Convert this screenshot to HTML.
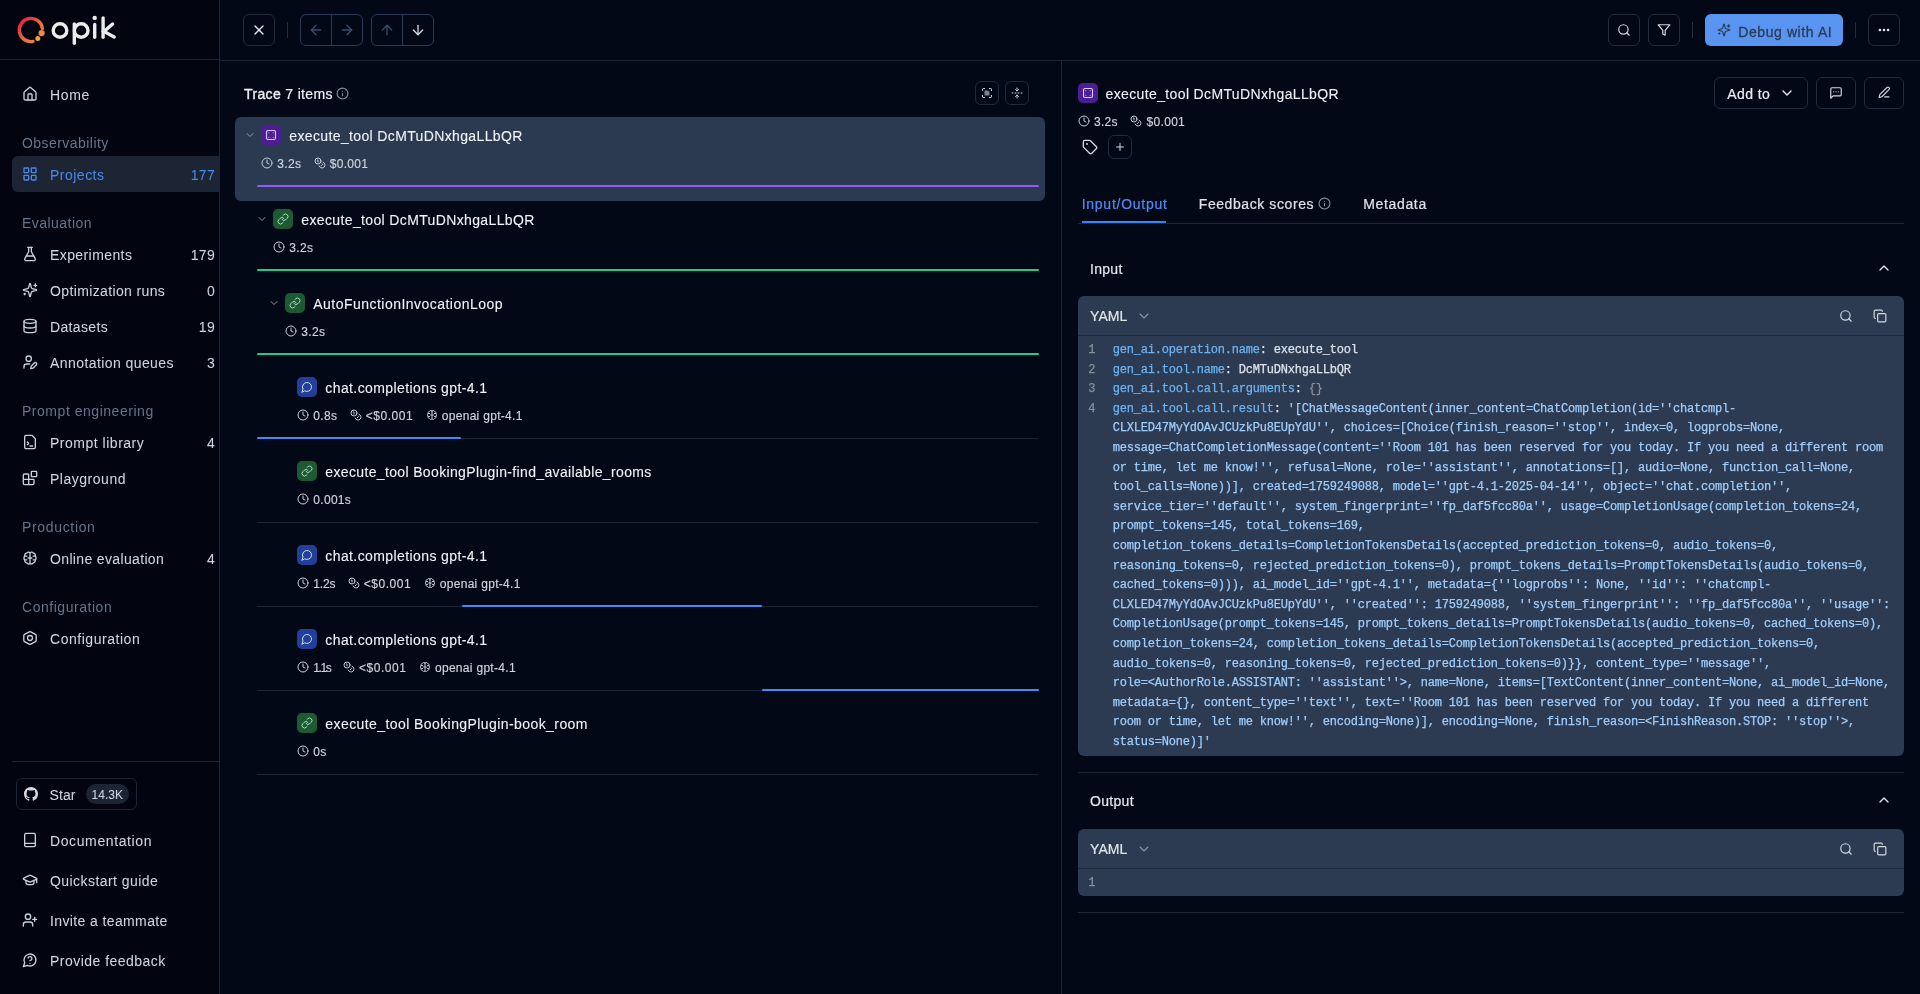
<!DOCTYPE html>
<html><head><meta charset="utf-8"><style>
*{box-sizing:border-box;margin:0;padding:0}
html,body{width:1920px;height:994px;overflow:hidden;background:#030816;font-family:"Liberation Sans",sans-serif;color:#d5d9df}
.a{position:absolute}
.t14{position:absolute;font-size:14px;line-height:20px;white-space:nowrap;letter-spacing:.35px;-webkit-text-stroke-width:.2px}
.t12{position:absolute;font-size:12px;line-height:16px;white-space:nowrap;letter-spacing:.3px;-webkit-text-stroke-width:.15px}
svg.i{position:absolute;fill:none;stroke:currentColor;stroke-linecap:round;stroke-linejoin:round}
svg.ii{fill:none;stroke:currentColor;stroke-linecap:round;stroke-linejoin:round}
#sb{position:absolute;left:0;top:0;width:220px;height:994px;background:#02050f;border-right:1px solid #1c2536}
.nav{color:#cdd6e2;-webkit-text-stroke-width:.05px}
.sec{color:#64748b;-webkit-text-stroke-width:0}
.cnt{position:absolute;right:4px;font-size:14px;line-height:20px;letter-spacing:.3px;text-align:right;-webkit-text-stroke-width:.05px;color:#cdd6e2}
.btn{position:absolute;border:1px solid #1f2a3c;border-radius:6px}
.hl{position:absolute;height:1px;background:#1c2536}
.code{position:absolute;font-family:"Liberation Mono",monospace;font-size:12px;letter-spacing:-0.2px;line-height:19.6px;white-space:pre;-webkit-text-stroke-width:.25px}
</style></head><body>
<div id="root" style="position:absolute;left:0;top:0;width:1920px;height:994px;background:#030816;will-change:transform;overflow:hidden">
<div id="sb">
<svg class="a" style="left:0;top:0" width="130" height="60" viewBox="0 0 130 60">
    <defs><linearGradient id="lg" x1="0" y1="0" x2="1" y2="1"><stop offset="0" stop-color="#e3173f"/><stop offset=".55" stop-color="#ee6a3c"/><stop offset="1" stop-color="#f4903a"/></linearGradient></defs>
    <path d="M42.4 28.4 A11.6 11.6 0 1 0 33.0 41.4" stroke="url(#lg)" stroke-width="3.4" fill="none" stroke-linecap="round"/>
    <circle cx="41.6" cy="33.1" r="3.1" fill="#f08a3c"/>
    <circle cx="37.8" cy="38.4" r="2.5" fill="#f29a42"/>
    <g stroke="#ececec" stroke-width="3.4" fill="none" stroke-linecap="round">
      <circle cx="60" cy="30.5" r="6.8"/><circle cx="81.2" cy="30.5" r="6.8"/>
      <path d="M74.3 24 V43.2"/><path d="M94.7 24.5 V37.3"/><path d="M103.1 18 V37.3"/><path d="M112.6 24 L104 31.5 L114.2 37"/>
    </g><circle cx="94.7" cy="17.9" r="2.2" fill="#ececec"/></svg>
<div class="hl" style="left:0;top:59px;width:219px"></div>
<svg class="i" style="left:22px;top:86px;color:#c8d1de;" width="16" height="16" viewBox="0 0 24 24" stroke-width="2"><path d="M15 21v-8a1 1 0 0 0-1-1h-4a1 1 0 0 0-1 1v8"/><path d="M3 10a2 2 0 0 1 .709-1.528l7-5.999a2 2 0 0 1 2.582 0l7 5.999A2 2 0 0 1 21 10v9a2 2 0 0 1-2 2H5a2 2 0 0 1-2-2z"/></svg>
<div class="t14 nav" style="left:50px;top:85.15px;letter-spacing:0.68px;">Home</div>
<div class="t14 sec" style="left:22px;top:133.35px;letter-spacing:0.449px;">Observability</div>
<div class="a" style="left:12px;top:156px;width:207px;height:36px;background:#1d2535;border-radius:6px 0 0 6px"></div>
<svg class="i" style="left:22px;top:166px;color:#4a88ec;" width="16" height="16" viewBox="0 0 24 24" stroke-width="2"><rect width="7" height="7" x="3" y="3" rx="1"/><rect width="7" height="7" x="14" y="3" rx="1"/><rect width="7" height="7" x="14" y="14" rx="1"/><rect width="7" height="7" x="3" y="14" rx="1"/></svg>
<div class="t14 nav" style="left:50px;top:164.75px;letter-spacing:0.49px;color:#4a88ec">Projects</div>
<div class="cnt" style="top:164.75px;color:#4a88ec">177</div>
<div class="t14 sec" style="left:22px;top:213.35px;letter-spacing:0.456px;">Evaluation</div>
<svg class="i" style="left:22px;top:246px;color:#c8d1de;" width="16" height="16" viewBox="0 0 24 24" stroke-width="2"><path d="M14 2v6a2 2 0 0 0 .245.96l5.51 10.08A2 2 0 0 1 18 22H6a2 2 0 0 1-1.755-2.96l5.51-10.08A2 2 0 0 0 10 8V2"/><path d="M6.453 15h11.094"/><path d="M8.5 2h7"/></svg>
<div class="t14 nav" style="left:50px;top:244.75px;letter-spacing:0.409px;">Experiments</div>
<div class="cnt" style="top:244.75px">179</div>
<svg class="i" style="left:22px;top:282px;color:#c8d1de;" width="16" height="16" viewBox="0 0 24 24" stroke-width="2"><path d="M9.937 15.5A2 2 0 0 0 8.5 14.063l-6.135-1.582a.5.5 0 0 1 0-.962L8.5 9.936A2 2 0 0 0 9.937 8.5l1.582-6.135a.5.5 0 0 1 .963 0L14.063 8.5A2 2 0 0 0 15.5 9.937l6.135 1.581a.5.5 0 0 1 0 .964L15.5 14.063a2 2 0 0 0-1.437 1.437l-1.582 6.135a.5.5 0 0 1-.963 0z"/><path d="M20 3v4"/><path d="M22 5h-4"/><path d="M4 17v2"/><path d="M5 18H3"/></svg>
<div class="t14 nav" style="left:50px;top:280.75px;letter-spacing:0.367px;">Optimization runs</div>
<div class="cnt" style="top:280.75px">0</div>
<svg class="i" style="left:22px;top:318px;color:#c8d1de;" width="16" height="16" viewBox="0 0 24 24" stroke-width="2"><ellipse cx="12" cy="5" rx="9" ry="3"/><path d="M3 5V19A9 3 0 0 0 21 19V5"/><path d="M3 12A9 3 0 0 0 21 12"/></svg>
<div class="t14 nav" style="left:50px;top:316.75px;letter-spacing:0.35px;">Datasets</div>
<div class="cnt" style="top:316.75px">19</div>
<svg class="i" style="left:22px;top:354px;color:#c8d1de;" width="16" height="16" viewBox="0 0 24 24" stroke-width="2"><path d="M11.5 15H7a4 4 0 0 0-4 4v2"/><path d="M21.378 16.626a1 1 0 0 0-3.004-3.004l-4.01 4.012a2 2 0 0 0-.506.854l-.837 2.87a.5.5 0 0 0 .62.62l2.87-.837a2 2 0 0 0 .854-.506z"/><circle cx="10" cy="7" r="4"/></svg>
<div class="t14 nav" style="left:50px;top:352.75px;letter-spacing:0.421px;">Annotation queues</div>
<div class="cnt" style="top:352.75px">3</div>
<div class="t14 sec" style="left:22px;top:401.35px;letter-spacing:0.529px;">Prompt engineering</div>
<svg class="i" style="left:22px;top:434px;color:#c8d1de;" width="16" height="16" viewBox="0 0 24 24" stroke-width="2"><path d="M15 2H6a2 2 0 0 0-2 2v16a2 2 0 0 0 2 2h12a2 2 0 0 0 2-2V7Z"/><path d="m8 16 2-2-2-2"/><path d="M12 18h4"/></svg>
<div class="t14 nav" style="left:50px;top:432.75px;letter-spacing:0.513px;">Prompt library</div>
<div class="cnt" style="top:432.75px">4</div>
<svg class="i" style="left:22px;top:470px;color:#c8d1de;" width="16" height="16" viewBox="0 0 24 24" stroke-width="2"><path d="M10 22V7a1 1 0 0 0-1-1H4a2 2 0 0 0-2 2v12a2 2 0 0 0 2 2h12a2 2 0 0 0 2-2v-5a1 1 0 0 0-1-1H2"/><rect x="14" y="2" width="8" height="8" rx="1"/></svg>
<div class="t14 nav" style="left:50px;top:468.75px;letter-spacing:0.518px;">Playground</div>
<div class="t14 sec" style="left:22px;top:517.35px;letter-spacing:0.662px;">Production</div>
<svg class="i" style="left:22px;top:550px;color:#c8d1de;" width="16" height="16" viewBox="0 0 24 24" stroke-width="2"><path d="M12 4C10.5 2.6 7.8 2.8 7 4.8 4.9 5 3.6 6.9 4.1 8.9 2.6 10.4 2.6 13.4 4.1 14.9 3.7 17.2 5.1 19.2 7.3 19.3 8.2 21.2 10.6 21.5 12 20 13.4 21.5 15.8 21.2 16.7 19.3 18.9 19.2 20.3 17.2 19.9 14.9 21.4 13.4 21.4 10.4 19.9 8.9 20.4 6.9 19.1 5 17 4.8 16.2 2.8 13.5 2.6 12 4Z"/><path d="M12 4v16"/><path d="M9.2 12h5.6"/><path d="M4.3 9.2h3"/><path d="M4.3 14.8h3"/><path d="M19.7 9.2h-3"/><path d="M19.7 14.8h-3"/></svg>
<div class="t14 nav" style="left:50px;top:548.75px;letter-spacing:0.35px;">Online evaluation</div>
<div class="cnt" style="top:548.75px">4</div>
<div class="t14 sec" style="left:22px;top:597.35px;letter-spacing:0.534px;">Configuration</div>
<svg class="i" style="left:22px;top:630px;color:#c8d1de;" width="16" height="16" viewBox="0 0 24 24" stroke-width="2"><path d="M10.8 2.7a2.4 2.4 0 0 1 2.4 0l6.9 3.9a2.4 2.4 0 0 1 1.2 2.1v6.6a2.4 2.4 0 0 1-1.2 2.1l-6.9 3.9a2.4 2.4 0 0 1-2.4 0l-6.9-3.9a2.4 2.4 0 0 1-1.2-2.1V8.7a2.4 2.4 0 0 1 1.2-2.1Z"/><circle cx="12" cy="12" r="3.7"/></svg>
<div class="t14 nav" style="left:50px;top:628.75px;letter-spacing:0.534px;">Configuration</div>
<div class="hl" style="left:12px;top:761px;width:207px"></div>
<div class="btn" style="left:16px;top:778px;width:121px;height:32px;border-color:#1c2536"></div>
<svg class="a" style="left:24px;top:787px" width="14" height="14" viewBox="0 0 16 16"><path fill="#d5d9df" d="M8 0C3.58 0 0 3.58 0 8c0 3.54 2.29 6.53 5.47 7.59.4.07.55-.17.55-.38 0-.19-.01-.82-.01-1.49-2.01.37-2.530-.49-2.69-.94-.09-.23-.48-.94-.82-1.13-.28-.15-.68-.52-.01-.53.63-.01 1.08.58 1.23.82.72 1.21 1.870.87 2.33.66.07-.52.28-.87.51-1.07-1.78-.2-3.64-.89-3.64-3.95 0-.87.31-1.59.82-2.15-.08-.2-.36-1.02.08-2.12 0 0 .67-.21 2.2.82.64-.18 1.32-.27 2-.27.68 0 1.36.09 2 .27 1.53-1.04 2.2-.82 2.2-.82.44 1.1.16 1.92.08 2.12.51.56.82 1.27.82 2.15 0 3.07-1.87 3.75-3.65 3.95.29.25.54.73.54 1.48 0 1.07-.01 1.93-.01 2.2 0 .21.15.46.55.38A8.013 8.013 0 0016 8c0-4.42-3.58-8-8-8z"/></svg>
<div class="t14 nav" style="left:49.5px;top:784.85px;letter-spacing:.1px">Star</div>
<div class="a" style="left:86px;top:784px;width:43px;height:20px;border-radius:10px;background:#1d2535"></div>
<div class="t12 nav" style="left:91.6px;top:786.74px;letter-spacing:0">14.3K</div>
<svg class="i" style="left:22px;top:832px;color:#c8d1de;" width="16" height="16" viewBox="0 0 24 24" stroke-width="2"><rect x="4" y="2" width="16" height="20" rx="2"/><path d="M4 17h16"/></svg>
<div class="t14 nav" style="left:50px;top:830.95px;letter-spacing:0.61px;">Documentation</div>
<svg class="i" style="left:22px;top:872px;color:#c8d1de;" width="16" height="16" viewBox="0 0 24 24" stroke-width="2"><path d="M21.42 10.922a1 1 0 0 0-.019-1.838L12.83 5.18a2 2 0 0 0-1.66 0L2.6 9.08a1 1 0 0 0 0 1.832l8.57 3.908a2 2 0 0 0 1.66 0z"/><path d="M22 10v6"/><path d="M6 12.5V16a6 3 0 0 0 12 0v-3.5"/></svg>
<div class="t14 nav" style="left:50px;top:870.95px;letter-spacing:0.442px;">Quickstart guide</div>
<svg class="i" style="left:22px;top:912px;color:#c8d1de;" width="16" height="16" viewBox="0 0 24 24" stroke-width="2"><path d="M16 21v-2a4 4 0 0 0-4-4H6a4 4 0 0 0-4 4v2"/><circle cx="9" cy="7" r="4"/><path d="M19 8v6"/><path d="M22 11h-6"/></svg>
<div class="t14 nav" style="left:50px;top:910.95px;letter-spacing:0.382px;">Invite a teammate</div>
<svg class="i" style="left:22px;top:952px;color:#c8d1de;" width="16" height="16" viewBox="0 0 24 24" stroke-width="2"><path d="M7.9 20A9 9 0 1 0 4 16.1L2 22Z"/><path d="M9.09 9a3 3 0 0 1 5.83 1c0 2-3 3-3 3"/><path d="M12 17h.01"/></svg>
<div class="t14 nav" style="left:50px;top:950.95px;letter-spacing:0.475px;">Provide feedback</div>
</div>
<div class="hl" style="left:220px;top:60px;width:1700px"></div>
<div class="a" style="left:1061px;top:61px;width:1px;height:933px;background:#1c2536"></div>
<div class="btn" style="left:243px;top:14px;width:32px;height:32px;border-color:#222c3d"></div>
<svg class="i" style="left:251px;top:22px;color:#e8ebef;" width="16" height="16" viewBox="0 0 24 24" stroke-width="2"><path d="M18 6 6 18"/><path d="m6 6 12 12"/></svg>
<div class="a" style="left:287px;top:22px;width:1px;height:16px;background:#222c3d"></div>
<div class="btn" style="left:300px;top:14px;width:63px;height:32px;border-color:#2a3954"></div>
<div class="a" style="left:331px;top:14px;width:1px;height:32px;background:#2a3954"></div>
<svg class="i" style="left:308px;top:22px;color:#3a4e6e;" width="16" height="16" viewBox="0 0 24 24" stroke-width="2"><path d="m12 19-7-7 7-7"/><path d="M19 12H5"/></svg>
<svg class="i" style="left:339px;top:22px;color:#3a4e6e;" width="16" height="16" viewBox="0 0 24 24" stroke-width="2"><path d="M5 12h14"/><path d="m12 5 7 7-7 7"/></svg>
<div class="btn" style="left:371px;top:14px;width:63px;height:32px;border-color:#2a3954"></div>
<div class="a" style="left:402px;top:14px;width:1px;height:32px;background:#2a3954"></div>
<svg class="i" style="left:379px;top:22px;color:#3a4e6e;" width="16" height="16" viewBox="0 0 24 24" stroke-width="2"><path d="m5 12 7-7 7 7"/><path d="M12 19V5"/></svg>
<svg class="i" style="left:410px;top:22px;color:#d5d9df;" width="16" height="16" viewBox="0 0 24 24" stroke-width="2"><path d="M12 5v14"/><path d="m19 12-7 7-7-7"/></svg>
<div class="btn" style="left:1608px;top:14px;width:32px;height:32px;border-color:#222c3d"></div>
<svg class="i" style="left:1617px;top:23px;color:#d5d9df;" width="14" height="14" viewBox="0 0 24 24" stroke-width="2"><circle cx="11" cy="11" r="8"/><path d="m21 21-4.3-4.3"/></svg>
<div class="btn" style="left:1648px;top:14px;width:32px;height:32px;border-color:#222c3d"></div>
<svg class="i" style="left:1657px;top:23px;color:#d5d9df;" width="14" height="14" viewBox="0 0 24 24" stroke-width="2"><path d="M22 3H2l8 9.46V19l4 2v-8.54L22 3z"/></svg>
<div class="a" style="left:1692px;top:22px;width:1px;height:16px;background:#222c3d"></div>
<div class="a" style="left:1705px;top:14px;width:138px;height:32px;background:#5a94f1;border-radius:6px"></div>
<svg class="i" style="left:1717px;top:23.3px;color:#2c3a52;" width="14" height="14" viewBox="0 0 24 24" stroke-width="2"><path d="M9.937 15.5A2 2 0 0 0 8.5 14.063l-6.135-1.582a.5.5 0 0 1 0-.962L8.5 9.936A2 2 0 0 0 9.937 8.5l1.582-6.135a.5.5 0 0 1 .963 0L14.063 8.5A2 2 0 0 0 15.5 9.937l6.135 1.581a.5.5 0 0 1 0 .964L15.5 14.063a2 2 0 0 0-1.437 1.437l-1.582 6.135a.5.5 0 0 1-.963 0z"/><path d="M20 3v4"/><path d="M22 5h-4"/><path d="M4 17v2"/><path d="M5 18H3"/></svg>
<div class="t14 " style="left:1738.2px;top:21.85px;letter-spacing:0.594px;color:#2c3a52;-webkit-text-stroke:.3px #2c3a52">Debug with AI</div>
<div class="a" style="left:1855px;top:22px;width:1px;height:16px;background:#222c3d"></div>
<div class="btn" style="left:1868px;top:14px;width:32px;height:32px;border-color:#222c3d"></div>
<svg class="i" style="left:1877px;top:23px;color:#e8ebef;" width="14" height="14" viewBox="0 0 24 24" stroke-width="2.6"><circle cx="12" cy="12" r="1"/><circle cx="19" cy="12" r="1"/><circle cx="5" cy="12" r="1"/></svg>
<div class="t14" style="left:244px;top:83.85px;color:#eef0f3"><span style="-webkit-text-stroke:.35px #eef0f3">Trace</span> 7 items</div>
<svg class="i" style="left:336px;top:87px;color:#8792a2;" width="13" height="13" viewBox="0 0 24 24" stroke-width="2"><circle cx="12" cy="12" r="10"/><path d="M12 16v-4"/><path d="M12 8h.01"/></svg>
<svg class="i" style="left:981px;top:87px;color:#8792a2;" width="12" height="12" viewBox="0 0 24 24" stroke-width="2"><g stroke="#e6e9ee"><path d="M3 7V5a2 2 0 0 1 2-2h2"/><path d="M17 3h2a2 2 0 0 1 2 2v2"/><path d="M21 17v2a2 2 0 0 1-2 2h-2"/><path d="M7 21H5a2 2 0 0 1-2-2v-2"/></g><path d="M7 7h7l3 3v7H7z" fill="#7a8494" stroke="none"/></svg>
<div class="btn" style="left:975px;top:81px;width:24px;height:24px;border-color:#1f2a3c"></div>
<div class="btn" style="left:1005px;top:81px;width:24px;height:24px;border-color:#1f2a3c"></div>
<svg class="i" style="left:1011px;top:87px;color:#c9ced6;" width="12" height="12" viewBox="0 0 24 24" stroke-width="2"><path d="M12 22v-6"/><path d="M12 8V2"/><path d="M4 12H2"/><path d="M10 12H8"/><path d="M16 12h-2"/><path d="M22 12h-2"/><path d="m15 19-3-3-3 3"/><path d="m15 5-3 3-3-3"/></svg>
<div class="a" style="left:235px;top:117px;width:810px;height:84px;background:#2c3a51;border-radius:6px"></div>
<svg class="i" style="left:244px;top:129px;color:#8d96a5;" width="12" height="12" viewBox="0 0 24 24" stroke-width="2"><path d="m6 9 6 6 6-6"/></svg>
<div class="a" style="left:261px;top:125px;width:20px;height:20px;border-radius:5px;background:#4d1d96"></div>
<svg class="a" style="left:261px;top:125px" width="20" height="20" viewBox="0 0 20 20"><rect x="5.5" y="5.5" width="9" height="9" rx="1.5" fill="none" stroke="#dccbff" stroke-width="1.1"/><circle cx="7.8" cy="7.8" r=".5" fill="#dccbff"/><circle cx="12.2" cy="7.8" r=".5" fill="#dccbff"/><circle cx="7.8" cy="12.2" r=".5" fill="#dccbff"/><circle cx="12.2" cy="12.2" r=".5" fill="#dccbff"/></svg>
<div class="t14 " style="left:289.3px;top:125.85px;letter-spacing:0.364px;color:#f1f4f8;-webkit-text-stroke-width:.1px">execute_tool DcMTuDNxhgaLLbQR</div>
<div class="a" style="left:261.3px;top:155.64px;display:flex;align-items:flex-start"><svg style="margin-top:1.36px;margin-right:4px;flex:none;color:#c9cfd7" class="ii" width="12" height="12" viewBox="0 0 24 24" stroke-width="2"><circle cx="12" cy="12" r="10"/><path d="M12 6v6l4 2"/></svg><span style="font-size:12px;line-height:16px;letter-spacing:0.3px;-webkit-text-stroke-width:.15px;color:#d0d5dc;white-space:nowrap">3.2s</span><svg style="margin-left:12.5px;margin-top:1.36px;margin-right:4px;flex:none;color:#c9cfd7" class="ii" width="12" height="12" viewBox="0 0 24 24" stroke-width="2"><circle cx="8" cy="8" r="6"/><path d="M18.09 10.37A6 6 0 1 1 10.34 18"/><path d="M7 6h1v4"/><path d="m16.71 13.88.7.71-2.82 2.82"/></svg><span style="font-size:12px;line-height:16px;letter-spacing:0.3px;-webkit-text-stroke-width:.15px;color:#d0d5dc;white-space:nowrap">$0.001</span></div>
<div class="a" style="left:257px;top:185px;width:782px;height:2px;background:#8f5cf7;border-radius:1px"></div>
<svg class="i" style="left:256px;top:213px;color:#8d96a5;" width="12" height="12" viewBox="0 0 24 24" stroke-width="2"><path d="m6 9 6 6 6-6"/></svg>
<div class="a" style="left:273px;top:209px;width:20px;height:20px;border-radius:5px;background:#1d5a34"></div>
<svg class="i" style="left:277px;top:213px;color:#a6e3b4;" width="12" height="12" viewBox="0 0 24 24" stroke-width="2"><path d="M10 13a5 5 0 0 0 7.54.54l3-3a5 5 0 0 0-7.07-7.07l-1.72 1.71"/><path d="M14 11a5 5 0 0 0-7.54-.54l-3 3a5 5 0 0 0 7.07 7.07l1.71-1.71"/></svg>
<div class="t14 " style="left:301.3px;top:209.85px;letter-spacing:0.364px;color:#f1f4f8;-webkit-text-stroke-width:.1px">execute_tool DcMTuDNxhgaLLbQR</div>
<div class="a" style="left:273.3px;top:239.64px;display:flex;align-items:flex-start"><svg style="margin-top:1.36px;margin-right:4px;flex:none;color:#c9cfd7" class="ii" width="12" height="12" viewBox="0 0 24 24" stroke-width="2"><circle cx="12" cy="12" r="10"/><path d="M12 6v6l4 2"/></svg><span style="font-size:12px;line-height:16px;letter-spacing:0.3px;-webkit-text-stroke-width:.15px;color:#d0d5dc;white-space:nowrap">3.2s</span></div>
<div class="hl" style="left:257px;top:270px;width:781px"></div>
<div class="a" style="left:257px;top:269px;width:782px;height:2px;background:#19cb8d;border-radius:1px"></div>
<svg class="i" style="left:268px;top:297px;color:#8d96a5;" width="12" height="12" viewBox="0 0 24 24" stroke-width="2"><path d="m6 9 6 6 6-6"/></svg>
<div class="a" style="left:285px;top:293px;width:20px;height:20px;border-radius:5px;background:#1d5a34"></div>
<svg class="i" style="left:289px;top:297px;color:#a6e3b4;" width="12" height="12" viewBox="0 0 24 24" stroke-width="2"><path d="M10 13a5 5 0 0 0 7.54.54l3-3a5 5 0 0 0-7.07-7.07l-1.72 1.71"/><path d="M14 11a5 5 0 0 0-7.54-.54l-3 3a5 5 0 0 0 7.07 7.07l1.71-1.71"/></svg>
<div class="t14 " style="left:313.3px;top:293.85px;letter-spacing:0.469px;color:#f1f4f8;-webkit-text-stroke-width:.1px">AutoFunctionInvocationLoop</div>
<div class="a" style="left:285.3px;top:323.64px;display:flex;align-items:flex-start"><svg style="margin-top:1.36px;margin-right:4px;flex:none;color:#c9cfd7" class="ii" width="12" height="12" viewBox="0 0 24 24" stroke-width="2"><circle cx="12" cy="12" r="10"/><path d="M12 6v6l4 2"/></svg><span style="font-size:12px;line-height:16px;letter-spacing:0.3px;-webkit-text-stroke-width:.15px;color:#d0d5dc;white-space:nowrap">3.2s</span></div>
<div class="hl" style="left:257px;top:354px;width:781px"></div>
<div class="a" style="left:257px;top:353px;width:782px;height:2px;background:#19cb8d;border-radius:1px"></div>
<div class="a" style="left:297px;top:377px;width:20px;height:20px;border-radius:5px;background:#22409a"></div>
<svg class="i" style="left:301px;top:381px;color:#d0dcff;" width="12" height="12" viewBox="0 0 24 24" stroke-width="2"><path d="M7.9 20A9 9 0 1 0 4 16.1L2 22Z"/></svg>
<div class="t14 " style="left:325.3px;top:377.85px;letter-spacing:0.402px;color:#f1f4f8;-webkit-text-stroke-width:.1px">chat.completions gpt-4.1</div>
<div class="a" style="left:297.3px;top:407.64px;display:flex;align-items:flex-start"><svg style="margin-top:1.36px;margin-right:4px;flex:none;color:#c9cfd7" class="ii" width="12" height="12" viewBox="0 0 24 24" stroke-width="2"><circle cx="12" cy="12" r="10"/><path d="M12 6v6l4 2"/></svg><span style="font-size:12px;line-height:16px;letter-spacing:0.3px;-webkit-text-stroke-width:.15px;color:#d0d5dc;white-space:nowrap">0.8s</span><svg style="margin-left:12.5px;margin-top:1.36px;margin-right:4px;flex:none;color:#c9cfd7" class="ii" width="12" height="12" viewBox="0 0 24 24" stroke-width="2"><circle cx="8" cy="8" r="6"/><path d="M18.09 10.37A6 6 0 1 1 10.34 18"/><path d="M7 6h1v4"/><path d="m16.71 13.88.7.71-2.82 2.82"/></svg><span style="font-size:12px;line-height:16px;letter-spacing:0.55px;-webkit-text-stroke-width:.15px;color:#d0d5dc;white-space:nowrap">&lt;$0.001</span><svg style="margin-left:12.5px;margin-top:1.36px;margin-right:4px;flex:none;color:#c9cfd7" class="ii" width="12" height="12" viewBox="0 0 24 24" stroke-width="2"><path d="M12 4C10.5 2.6 7.8 2.8 7 4.8 4.9 5 3.6 6.9 4.1 8.9 2.6 10.4 2.6 13.4 4.1 14.9 3.7 17.2 5.1 19.2 7.3 19.3 8.2 21.2 10.6 21.5 12 20 13.4 21.5 15.8 21.2 16.7 19.3 18.9 19.2 20.3 17.2 19.9 14.9 21.4 13.4 21.4 10.4 19.9 8.9 20.4 6.9 19.1 5 17 4.8 16.2 2.8 13.5 2.6 12 4Z"/><path d="M12 4v16"/><path d="M9.2 12h5.6"/><path d="M4.3 9.2h3"/><path d="M4.3 14.8h3"/><path d="M19.7 9.2h-3"/><path d="M19.7 14.8h-3"/></svg><span style="font-size:12px;line-height:16px;letter-spacing:0.3px;-webkit-text-stroke-width:.15px;color:#d0d5dc;white-space:nowrap">openai gpt-4.1</span></div>
<div class="hl" style="left:257px;top:438px;width:781px"></div>
<div class="a" style="left:257px;top:437px;width:204px;height:2px;background:#3c8cfa;border-radius:1px"></div>
<div class="a" style="left:297px;top:461px;width:20px;height:20px;border-radius:5px;background:#1d5a34"></div>
<svg class="i" style="left:301px;top:465px;color:#a6e3b4;" width="12" height="12" viewBox="0 0 24 24" stroke-width="2"><path d="M10 13a5 5 0 0 0 7.54.54l3-3a5 5 0 0 0-7.07-7.07l-1.72 1.71"/><path d="M14 11a5 5 0 0 0-7.54-.54l-3 3a5 5 0 0 0 7.07 7.07l1.71-1.71"/></svg>
<div class="t14 " style="left:325.3px;top:461.85px;letter-spacing:0.353px;color:#f1f4f8;-webkit-text-stroke-width:.1px">execute_tool BookingPlugin-find_available_rooms</div>
<div class="a" style="left:297.3px;top:491.64px;display:flex;align-items:flex-start"><svg style="margin-top:1.36px;margin-right:4px;flex:none;color:#c9cfd7" class="ii" width="12" height="12" viewBox="0 0 24 24" stroke-width="2"><circle cx="12" cy="12" r="10"/><path d="M12 6v6l4 2"/></svg><span style="font-size:12px;line-height:16px;letter-spacing:0.3px;-webkit-text-stroke-width:.15px;color:#d0d5dc;white-space:nowrap">0.001s</span></div>
<div class="hl" style="left:257px;top:522px;width:781px"></div>
<div class="a" style="left:297px;top:545px;width:20px;height:20px;border-radius:5px;background:#22409a"></div>
<svg class="i" style="left:301px;top:549px;color:#d0dcff;" width="12" height="12" viewBox="0 0 24 24" stroke-width="2"><path d="M7.9 20A9 9 0 1 0 4 16.1L2 22Z"/></svg>
<div class="t14 " style="left:325.3px;top:545.85px;letter-spacing:0.402px;color:#f1f4f8;-webkit-text-stroke-width:.1px">chat.completions gpt-4.1</div>
<div class="a" style="left:297.3px;top:575.64px;display:flex;align-items:flex-start"><svg style="margin-top:1.36px;margin-right:4px;flex:none;color:#c9cfd7" class="ii" width="12" height="12" viewBox="0 0 24 24" stroke-width="2"><circle cx="12" cy="12" r="10"/><path d="M12 6v6l4 2"/></svg><span style="font-size:12px;line-height:16px;letter-spacing:-0.2px;-webkit-text-stroke-width:.15px;color:#d0d5dc;white-space:nowrap">1.2s</span><svg style="margin-left:12.5px;margin-top:1.36px;margin-right:4px;flex:none;color:#c9cfd7" class="ii" width="12" height="12" viewBox="0 0 24 24" stroke-width="2"><circle cx="8" cy="8" r="6"/><path d="M18.09 10.37A6 6 0 1 1 10.34 18"/><path d="M7 6h1v4"/><path d="m16.71 13.88.7.71-2.82 2.82"/></svg><span style="font-size:12px;line-height:16px;letter-spacing:0.55px;-webkit-text-stroke-width:.15px;color:#d0d5dc;white-space:nowrap">&lt;$0.001</span><svg style="margin-left:12.5px;margin-top:1.36px;margin-right:4px;flex:none;color:#c9cfd7" class="ii" width="12" height="12" viewBox="0 0 24 24" stroke-width="2"><path d="M12 4C10.5 2.6 7.8 2.8 7 4.8 4.9 5 3.6 6.9 4.1 8.9 2.6 10.4 2.6 13.4 4.1 14.9 3.7 17.2 5.1 19.2 7.3 19.3 8.2 21.2 10.6 21.5 12 20 13.4 21.5 15.8 21.2 16.7 19.3 18.9 19.2 20.3 17.2 19.9 14.9 21.4 13.4 21.4 10.4 19.9 8.9 20.4 6.9 19.1 5 17 4.8 16.2 2.8 13.5 2.6 12 4Z"/><path d="M12 4v16"/><path d="M9.2 12h5.6"/><path d="M4.3 9.2h3"/><path d="M4.3 14.8h3"/><path d="M19.7 9.2h-3"/><path d="M19.7 14.8h-3"/></svg><span style="font-size:12px;line-height:16px;letter-spacing:0.3px;-webkit-text-stroke-width:.15px;color:#d0d5dc;white-space:nowrap">openai gpt-4.1</span></div>
<div class="hl" style="left:257px;top:606px;width:781px"></div>
<div class="a" style="left:462px;top:605px;width:300px;height:2px;background:#3c8cfa;border-radius:1px"></div>
<div class="a" style="left:297px;top:629px;width:20px;height:20px;border-radius:5px;background:#22409a"></div>
<svg class="i" style="left:301px;top:633px;color:#d0dcff;" width="12" height="12" viewBox="0 0 24 24" stroke-width="2"><path d="M7.9 20A9 9 0 1 0 4 16.1L2 22Z"/></svg>
<div class="t14 " style="left:325.3px;top:629.85px;letter-spacing:0.402px;color:#f1f4f8;-webkit-text-stroke-width:.1px">chat.completions gpt-4.1</div>
<div class="a" style="left:297.3px;top:659.64px;display:flex;align-items:flex-start"><svg style="margin-top:1.36px;margin-right:4px;flex:none;color:#c9cfd7" class="ii" width="12" height="12" viewBox="0 0 24 24" stroke-width="2"><circle cx="12" cy="12" r="10"/><path d="M12 6v6l4 2"/></svg><span style="font-size:12px;line-height:16px;letter-spacing:-1.4px;-webkit-text-stroke-width:.15px;color:#d0d5dc;white-space:nowrap">1.1s</span><svg style="margin-left:12.5px;margin-top:1.36px;margin-right:4px;flex:none;color:#c9cfd7" class="ii" width="12" height="12" viewBox="0 0 24 24" stroke-width="2"><circle cx="8" cy="8" r="6"/><path d="M18.09 10.37A6 6 0 1 1 10.34 18"/><path d="M7 6h1v4"/><path d="m16.71 13.88.7.71-2.82 2.82"/></svg><span style="font-size:12px;line-height:16px;letter-spacing:0.55px;-webkit-text-stroke-width:.15px;color:#d0d5dc;white-space:nowrap">&lt;$0.001</span><svg style="margin-left:12.5px;margin-top:1.36px;margin-right:4px;flex:none;color:#c9cfd7" class="ii" width="12" height="12" viewBox="0 0 24 24" stroke-width="2"><path d="M12 4C10.5 2.6 7.8 2.8 7 4.8 4.9 5 3.6 6.9 4.1 8.9 2.6 10.4 2.6 13.4 4.1 14.9 3.7 17.2 5.1 19.2 7.3 19.3 8.2 21.2 10.6 21.5 12 20 13.4 21.5 15.8 21.2 16.7 19.3 18.9 19.2 20.3 17.2 19.9 14.9 21.4 13.4 21.4 10.4 19.9 8.9 20.4 6.9 19.1 5 17 4.8 16.2 2.8 13.5 2.6 12 4Z"/><path d="M12 4v16"/><path d="M9.2 12h5.6"/><path d="M4.3 9.2h3"/><path d="M4.3 14.8h3"/><path d="M19.7 9.2h-3"/><path d="M19.7 14.8h-3"/></svg><span style="font-size:12px;line-height:16px;letter-spacing:0.3px;-webkit-text-stroke-width:.15px;color:#d0d5dc;white-space:nowrap">openai gpt-4.1</span></div>
<div class="hl" style="left:257px;top:690px;width:781px"></div>
<div class="a" style="left:762px;top:689px;width:276.5px;height:2px;background:#3c8cfa;border-radius:1px"></div>
<div class="a" style="left:297px;top:713px;width:20px;height:20px;border-radius:5px;background:#1d5a34"></div>
<svg class="i" style="left:301px;top:717px;color:#a6e3b4;" width="12" height="12" viewBox="0 0 24 24" stroke-width="2"><path d="M10 13a5 5 0 0 0 7.54.54l3-3a5 5 0 0 0-7.07-7.07l-1.72 1.71"/><path d="M14 11a5 5 0 0 0-7.54-.54l-3 3a5 5 0 0 0 7.07 7.07l1.71-1.71"/></svg>
<div class="t14 " style="left:325.3px;top:713.85px;letter-spacing:0.419px;color:#f1f4f8;-webkit-text-stroke-width:.1px">execute_tool BookingPlugin-book_room</div>
<div class="a" style="left:297.3px;top:743.64px;display:flex;align-items:flex-start"><svg style="margin-top:1.36px;margin-right:4px;flex:none;color:#c9cfd7" class="ii" width="12" height="12" viewBox="0 0 24 24" stroke-width="2"><circle cx="12" cy="12" r="10"/><path d="M12 6v6l4 2"/></svg><span style="font-size:12px;line-height:16px;letter-spacing:0.3px;-webkit-text-stroke-width:.15px;color:#d0d5dc;white-space:nowrap">0s</span></div>
<div class="hl" style="left:257px;top:774px;width:781px"></div>
<div class="a" style="left:1078px;top:83px;width:20px;height:20px;border-radius:5px;background:#4d1d96"></div>
<svg class="a" style="left:1078px;top:83px" width="20" height="20" viewBox="0 0 20 20"><rect x="5.5" y="5.5" width="9" height="9" rx="1.5" fill="none" stroke="#dccbff" stroke-width="1.1"/><circle cx="7.8" cy="7.8" r=".5" fill="#dccbff"/><circle cx="12.2" cy="7.8" r=".5" fill="#dccbff"/><circle cx="7.8" cy="12.2" r=".5" fill="#dccbff"/><circle cx="12.2" cy="12.2" r=".5" fill="#dccbff"/></svg>
<div class="t14 " style="left:1105.6px;top:84.15px;letter-spacing:0.364px;color:#f1f4f8;-webkit-text-stroke-width:.1px">execute_tool DcMTuDNxhgaLLbQR</div>
<svg class="i" style="left:1078px;top:115px;color:#c9cfd7;" width="12" height="12" viewBox="0 0 24 24" stroke-width="2"><circle cx="12" cy="12" r="10"/><path d="M12 6v6l4 2"/></svg>
<div class="t12 " style="left:1094px;top:113.74px;color:#d0d5dc">3.2s</div>
<svg class="i" style="left:1130px;top:115px;color:#c9cfd7;" width="12" height="12" viewBox="0 0 24 24" stroke-width="2"><circle cx="8" cy="8" r="6"/><path d="M18.09 10.37A6 6 0 1 1 10.34 18"/><path d="M7 6h1v4"/><path d="m16.71 13.88.7.71-2.82 2.82"/></svg>
<div class="t12 " style="left:1146.6px;top:113.74px;color:#d0d5dc">$0.001</div>
<svg class="i" style="left:1082px;top:139px;color:#d5d9df;" width="16" height="16" viewBox="0 0 24 24" stroke-width="2"><path d="M12.586 2.586A2 2 0 0 0 11.172 2H4a2 2 0 0 0-2 2v7.172a2 2 0 0 0 .586 1.414l8.704 8.704a2.426 2.426 0 0 0 3.42 0l6.58-6.58a2.426 2.426 0 0 0 0-3.42z"/><circle cx="7.5" cy="7.5" r=".5" fill="currentColor"/></svg>
<div class="btn" style="left:1108px;top:135px;width:24px;height:24px;border-color:#1f2a3c"></div>
<svg class="i" style="left:1114px;top:141px;color:#d5d9df;" width="12" height="12" viewBox="0 0 24 24" stroke-width="2"><path d="M5 12h14"/><path d="M12 5v14"/></svg>
<div class="btn" style="left:1714px;top:77px;width:94px;height:32px;border-color:#222c3d"></div>
<div class="t14 " style="left:1727.3px;top:83.75px;letter-spacing:0.422px;color:#e9ecf0">Add to</div>
<svg class="i" style="left:1779px;top:85px;color:#e9ecf0;" width="16" height="16" viewBox="0 0 24 24" stroke-width="2"><path d="m6 9 6 6 6-6"/></svg>
<div class="btn" style="left:1816px;top:77px;width:40px;height:32px;border-color:#222c3d"></div>
<svg class="i" style="left:1829px;top:86px;color:#d5d9df;" width="14" height="14" viewBox="0 0 24 24" stroke-width="2"><path d="M21 15a2 2 0 0 1-2 2H7l-4 4V5a2 2 0 0 1 2-2h14a2 2 0 0 1 2 2z"/><path d="M8 10h.01"/><path d="M12 10h.01"/><path d="M16 10h.01"/></svg>
<div class="btn" style="left:1864px;top:77px;width:40px;height:32px;border-color:#222c3d"></div>
<svg class="i" style="left:1878px;top:86.4px;color:#d5d9df;" width="12.5" height="12.5" viewBox="0 0 24 24" stroke-width="2.2"><path d="M13 21h8"/><path d="M21.174 6.812a1 1 0 0 0-3.986-3.987L3.842 16.174a2 2 0 0 0-.5.83l-1.321 4.352a.5.5 0 0 0 .623.622l4.353-1.32a2 2 0 0 0 .83-.497z"/></svg>
<div class="t14 " style="left:1081.7px;top:194.35px;letter-spacing:0.74px;color:#4a8ef5">Input/Output</div>
<div class="a" style="left:1082px;top:221px;width:84px;height:2px;background:#3b82f6"></div>
<div class="t14 " style="left:1198.75px;top:194.35px;letter-spacing:0.582px;color:#dfe3e8">Feedback scores</div>
<svg class="i" style="left:1318px;top:197px;color:#8792a2;" width="13" height="13" viewBox="0 0 24 24" stroke-width="2"><circle cx="12" cy="12" r="10"/><path d="M12 16v-4"/><path d="M12 8h.01"/></svg>
<div class="t14 " style="left:1363.3px;top:194.35px;letter-spacing:0.645px;color:#dfe3e8">Metadata</div>
<div class="hl" style="left:1078px;top:223px;width:826px"></div>
<div class="t14 " style="left:1090px;top:258.95px;color:#e2e6ea;letter-spacing:.3px">Input</div>
<svg class="i" style="left:1876px;top:260px;color:#e2e6ea;" width="16" height="16" viewBox="0 0 24 24" stroke-width="2"><path d="m18 15-6-6-6 6"/></svg>
<div class="a" style="left:1078px;top:296px;width:826px;height:460px;background:#2c3a52;border-radius:6px"></div>
<div class="t14 " style="left:1090px;top:305.95px;color:#e2e6ea;letter-spacing:.1px">YAML</div>
<svg class="i" style="left:1136px;top:308px;color:#8a96a8;" width="16" height="16" viewBox="0 0 24 24" stroke-width="1.6"><path d="m6 9 6 6 6-6"/></svg>
<svg class="i" style="left:1839px;top:309px;color:#d5d9df;" width="14" height="14" viewBox="0 0 24 24" stroke-width="2"><circle cx="11" cy="11" r="8"/><path d="m21 21-4.3-4.3"/></svg>
<svg class="i" style="left:1873px;top:309px;color:#d5d9df;" width="14" height="14" viewBox="0 0 24 24" stroke-width="2"><rect width="14" height="14" x="8" y="8" rx="2"/><path d="M4 16c-1.1 0-2-.9-2-2V4c0-1.1.9-2 2-2h10c1.1 0 2 .9 2 2"/></svg>
<div class="a" style="left:1078px;top:335px;width:826px;height:1px;background:#1d283a"></div>
<div class="code" style="left:1112.8px;top:341.10px"><span style="color:#6ab4f4">gen_ai.operation.name</span><span style="color:#dde3ea">: execute_tool</span>
<span style="color:#6ab4f4">gen_ai.tool.name</span><span style="color:#dde3ea">: DcMTuDNxhgaLLbQR</span>
<span style="color:#6ab4f4">gen_ai.tool.call.arguments</span><span style="color:#dde3ea">: </span><span style="color:#8c9099">{}</span>
<span style="color:#6ab4f4">gen_ai.tool.call.result</span><span style="color:#dde3ea">: </span><span style="color:#9fcdfa">'[ChatMessageContent(inner_content=ChatCompletion(id=''chatcmpl-</span>
<span style="color:#9fcdfa">CLXLED47MyYdOAvJCUzkPu8EUpYdU'', choices=[Choice(finish_reason=''stop'', index=0, logprobs=None,</span>
<span style="color:#9fcdfa">message=ChatCompletionMessage(content=''Room 101 has been reserved for you today. If you need a different room</span>
<span style="color:#9fcdfa">or time, let me know!'', refusal=None, role=''assistant'', annotations=[], audio=None, function_call=None,</span>
<span style="color:#9fcdfa">tool_calls=None))], created=1759249088, model=''gpt-4.1-2025-04-14'', object=''chat.completion'',</span>
<span style="color:#9fcdfa">service_tier=''default'', system_fingerprint=''fp_daf5fcc80a'', usage=CompletionUsage(completion_tokens=24,</span>
<span style="color:#9fcdfa">prompt_tokens=145, total_tokens=169,</span>
<span style="color:#9fcdfa">completion_tokens_details=CompletionTokensDetails(accepted_prediction_tokens=0, audio_tokens=0,</span>
<span style="color:#9fcdfa">reasoning_tokens=0, rejected_prediction_tokens=0), prompt_tokens_details=PromptTokensDetails(audio_tokens=0,</span>
<span style="color:#9fcdfa">cached_tokens=0))), ai_model_id=''gpt-4.1'', metadata={''logprobs'': None, ''id'': ''chatcmpl-</span>
<span style="color:#9fcdfa">CLXLED47MyYdOAvJCUzkPu8EUpYdU'', ''created'': 1759249088, ''system_fingerprint'': ''fp_daf5fcc80a'', ''usage'':</span>
<span style="color:#9fcdfa">CompletionUsage(prompt_tokens=145, prompt_tokens_details=PromptTokensDetails(audio_tokens=0, cached_tokens=0),</span>
<span style="color:#9fcdfa">completion_tokens=24, completion_tokens_details=CompletionTokensDetails(accepted_prediction_tokens=0,</span>
<span style="color:#9fcdfa">audio_tokens=0, reasoning_tokens=0, rejected_prediction_tokens=0)}}, content_type=''message'',</span>
<span style="color:#9fcdfa">role=&lt;AuthorRole.ASSISTANT: ''assistant''&gt;, name=None, items=[TextContent(inner_content=None, ai_model_id=None,</span>
<span style="color:#9fcdfa">metadata={}, content_type=''text'', text=''Room 101 has been reserved for you today. If you need a different</span>
<span style="color:#9fcdfa">room or time, let me know!'', encoding=None)], encoding=None, finish_reason=&lt;FinishReason.STOP: ''stop''&gt;,</span>
<span style="color:#9fcdfa">status=None)]'</span></div>
<div class="code" style="left:1088.3px;top:341.10px;color:#8a9099">1</div>
<div class="code" style="left:1088.3px;top:360.70px;color:#8a9099">2</div>
<div class="code" style="left:1088.3px;top:380.30px;color:#8a9099">3</div>
<div class="code" style="left:1088.3px;top:399.90px;color:#8a9099">4</div>
<div class="hl" style="left:1078px;top:772px;width:826px"></div>
<div class="t14 " style="left:1090px;top:791.25px;color:#e2e6ea;letter-spacing:.3px">Output</div>
<svg class="i" style="left:1876px;top:792px;color:#e2e6ea;" width="16" height="16" viewBox="0 0 24 24" stroke-width="2"><path d="m18 15-6-6-6 6"/></svg>
<div class="a" style="left:1078px;top:829px;width:826px;height:67px;background:#2c3a52;border-radius:6px"></div>
<div class="t14 " style="left:1090px;top:839.25px;color:#e2e6ea;letter-spacing:.1px">YAML</div>
<svg class="i" style="left:1136px;top:841px;color:#8a96a8;" width="16" height="16" viewBox="0 0 24 24" stroke-width="1.6"><path d="m6 9 6 6 6-6"/></svg>
<svg class="i" style="left:1839px;top:842px;color:#d5d9df;" width="14" height="14" viewBox="0 0 24 24" stroke-width="2"><circle cx="11" cy="11" r="8"/><path d="m21 21-4.3-4.3"/></svg>
<svg class="i" style="left:1873px;top:842px;color:#d5d9df;" width="14" height="14" viewBox="0 0 24 24" stroke-width="2"><rect width="14" height="14" x="8" y="8" rx="2"/><path d="M4 16c-1.1 0-2-.9-2-2V4c0-1.1.9-2 2-2h10c1.1 0 2 .9 2 2"/></svg>
<div class="a" style="left:1078px;top:868px;width:826px;height:1px;background:#1d283a"></div>
<div class="code" style="left:1088.3px;top:873.94px;color:#8a9099">1</div>
<div class="hl" style="left:1078px;top:912px;width:826px"></div>
</div></body></html>
